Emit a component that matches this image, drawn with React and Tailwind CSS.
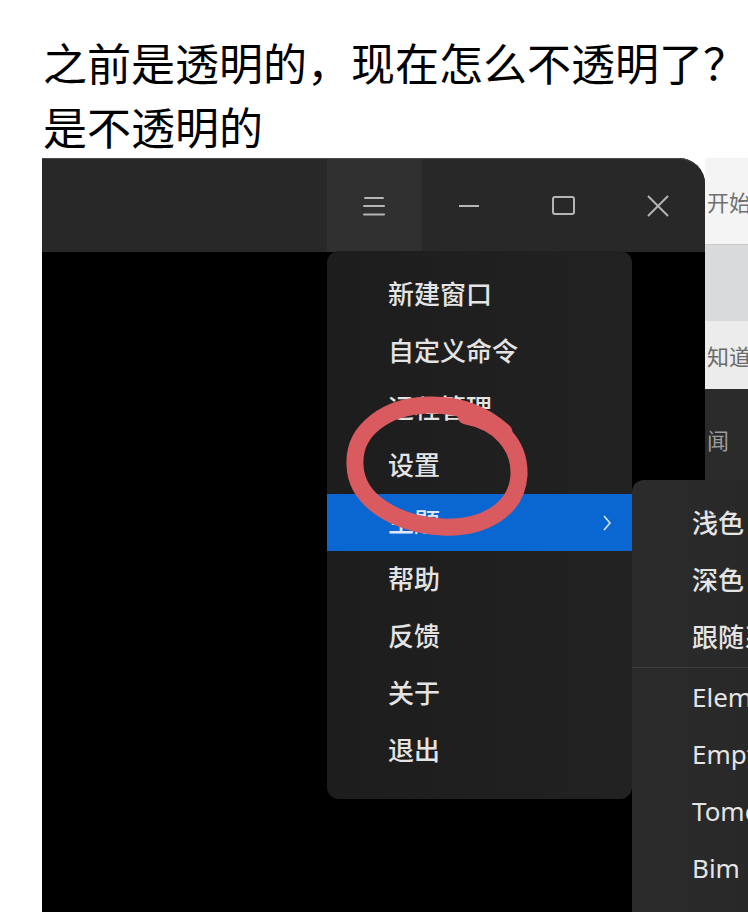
const MENU_ITEMS = ['新建窗口', '自定义命令', '远程管理', '设置', '主题', '帮助', '反馈', '关于', '退出']
const THEME_ITEMS = ['浅色', '深色', '跟随系统']
const SCHEME_ITEMS = ['Element', 'Empty', 'Tomorrow', 'Bim']

function TitleButton({ children, active }) {
  return (
    <div className={`w-[94.5px] h-full shrink-0 flex items-center justify-center ${active ? 'bg-[#303030]' : ''}`}>
      {children}
    </div>
  )
}

export default function App() {
  return (
    <div className="relative w-[748px] h-[912px] overflow-hidden bg-white font-['Noto_Sans','Noto_Sans_CJK_SC',sans-serif]">
      <h1 className="pl-[43px] pt-[30px] text-[44px] leading-[64px] font-normal text-black whitespace-nowrap font-['Noto_Sans_CJK_SC',sans-serif]">
        之前是透明的，现在怎么不透明了？
        <br />
        是不透明的
      </h1>

      <div className="flex h-[755px] pl-[42px]">
        {/* terminal window */}
        <div className="relative w-[663px] shrink-0 flex flex-col bg-black rounded-tr-[26px]">
          <div className="h-[94px] flex justify-end bg-[#282828] border-t border-[#4a4a4a] rounded-tr-[26px] overflow-hidden">
            <TitleButton active>
              <svg width="22" height="20" viewBox="0 0 22 20" stroke="#b5b5b5" strokeWidth="2" strokeLinecap="round">
                <line x1="2" y1="2" x2="20" y2="2" />
                <line x1="1" y1="10" x2="21" y2="10" />
                <line x1="1" y1="18.5" x2="21" y2="18.5" />
              </svg>
            </TitleButton>
            <TitleButton>
              <svg width="22" height="4" viewBox="0 0 22 4" stroke="#b5b5b5" strokeWidth="2">
                <line x1="1" y1="2" x2="21" y2="2" />
              </svg>
            </TitleButton>
            <TitleButton>
              <svg width="23" height="19" viewBox="0 0 23 19" fill="none" stroke="#b5b5b5" strokeWidth="2">
                <rect x="1" y="1" width="21" height="17" rx="2" />
              </svg>
            </TitleButton>
            <TitleButton>
              <svg width="22" height="22" viewBox="0 0 22 22" stroke="#b5b5b5" strokeWidth="2">
                <line x1="1" y1="1" x2="21" y2="21" />
                <line x1="21" y1="1" x2="1" y2="21" />
              </svg>
            </TitleButton>
          </div>
          <div className="flex-1 bg-black" />

          {/* main menu */}
          <div className="absolute left-[285px] top-[93px] w-[305px] pt-[15px] pb-[20px] rounded-[12px] bg-gradient-to-r from-[#1d1d1d] to-[#222222] text-[26px] font-medium text-[#e4e4e4]">
            {MENU_ITEMS.map((item) => (
              <div
                key={item}
                className={`h-[57px] flex items-center justify-between pl-[61px] pr-[20px] ${item === '主题' ? 'bg-[#0a66d0] text-[#dce8f8]' : ''}`}
              >
                <span>{item}</span>
                {item === '主题' && (
                  <svg width="10" height="18" viewBox="0 0 10 18" fill="none" stroke="#d8e6f8" strokeWidth="1.6">
                    <polyline points="2,2 8,9 2,16" />
                  </svg>
                )}
              </div>
            ))}
          </div>
        </div>

        {/* app behind */}
        <div className="flex-1 min-w-0 overflow-hidden flex flex-col text-[22px] font-['Noto_Sans_CJK_SC',sans-serif]">
          <div className="h-[86px] flex items-center pl-[2px] bg-[#f4f4f4] text-[#707070] whitespace-nowrap">开始</div>
          <div className="h-px bg-[#c9c9c9]" />
          <div className="h-[76px] bg-[#d9dadc]" />
          <div className="h-[68px] flex items-center pl-[2px] bg-[#ececec] text-[#6a6a6a] whitespace-nowrap">知道</div>
          <div className="flex-1 bg-[#2b2b2b] pt-[35px] pl-[2px] text-[#9c9c9c] leading-[30px]">闻</div>
        </div>
      </div>

      {/* theme submenu */}
      <div className="absolute left-[632px] top-[480px] w-[240px] h-[460px] pt-[15px] rounded-tl-[12px] bg-gradient-to-r from-[#2b2b2b] to-[#262626] text-[26px] font-medium text-[#e4e4e4] whitespace-nowrap">
        {THEME_ITEMS.map((item) => (
          <div key={item} className="h-[57px] flex items-center pl-[60px]">{item}</div>
        ))}
        <div className="my-px h-px bg-[#3c3c3c]" />
        {SCHEME_ITEMS.map((item) => (
          <div key={item} className="h-[57px] flex items-center pl-[60px] font-normal">{item}</div>
        ))}
      </div>

      {/* red hand-drawn circle */}
      <svg className="absolute inset-0 pointer-events-none" width="748" height="912" viewBox="0 0 748 912" fill="none">
        <path
          d="M466 416 C498 422 520 444 519 475 C517 510 483 529 442 527 C396 524 356 501 355 465 C353 429 388 406 428 405 C458 404 484 414 504 432"
          stroke="#d95a5f"
          strokeWidth="17"
          strokeLinecap="round"
          strokeLinejoin="round"
        />
      </svg>
    </div>
  )
}
